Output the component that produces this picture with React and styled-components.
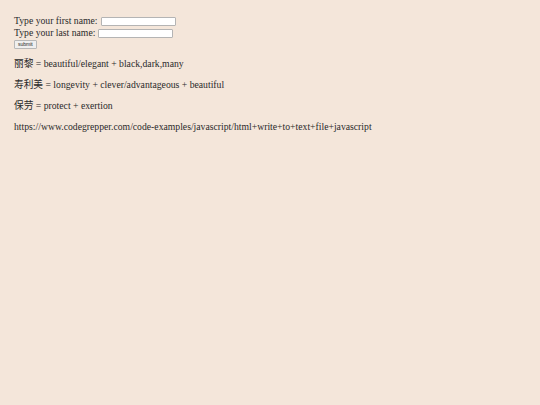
import styled, { createGlobalStyle } from 'styled-components';

const GlobalStyle = createGlobalStyle`
    html, body {
        margin: 0;
        background: #f4e6da;
    }
    body {
        padding: 15px 14px;
        font-family: "Liberation Serif", "Noto Sans CJK SC", serif;
        font-size: 9.7px;
        color: #2a2a2a;
    }
`

const Form = styled.form`
    display: flex;
    flex-direction: column;
    align-items: flex-start;
`

const Row = styled.label`
    display: flex;
    align-items: center;
    gap: 3px;
    line-height: 12px;
`

const TextInput = styled.input`
    width: 69px;
    height: 5px;
    padding: 1px 2px;
    border: 1px solid #b4b4b4;
    border-radius: 1px;
    background: #fff;
    font-size: 6px;
`

const SubmitButton = styled.button`
    margin-top: 1px;
    height: 9px;
    padding: 0 3px;
    font-family: "Liberation Sans", sans-serif;
    font-size: 5px;
    line-height: 7px;
    color: #222;
    background: #efefef;
    border: 1px solid #b8b8b8;
    border-radius: 1px;
`

const Note = styled.p`
    margin: 9px 0 0;
    line-height: 11px;
    & + & {
        margin-top: 10px;
    }
`

const notes = [
    '丽黎 = beautiful/elegant + black,dark,many',
    '寿利美 = longevity + clever/advantageous + beautiful',
    '保劳 = protect + exertion',
    'https://www.codegrepper.com/code-examples/javascript/html+write+to+text+file+javascript',
];

export default function App() {
    return (
        <>
            <GlobalStyle />
            <Form onSubmit={e => e.preventDefault()}>
                <Row>Type your first name: <TextInput type="text" /></Row>
                <Row>Type your last name: <TextInput type="text" /></Row>
                <SubmitButton type="submit">submit</SubmitButton>
            </Form>
            {notes.map((note, i) => <Note key={i}>{note}</Note>)}
        </>
    )
}
